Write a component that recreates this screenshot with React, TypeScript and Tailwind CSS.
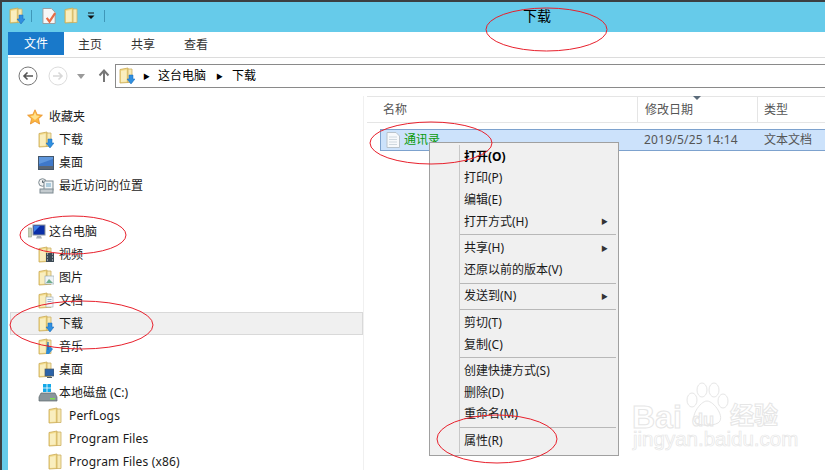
import React from 'react';

const cjk = "font-['Noto_Sans','Noto_Sans_CJK_SC',sans-serif]";

const Folder = ({ children, className = '' }: { children?: React.ReactNode; className?: string }) => (
  <svg viewBox="0 0 16 18" className={`h-[18px] w-[16px] shrink-0 ${className}`}>
    <path d="M1 2.5 L9 1 V15.5 L1 16 Z" fill="#f3dc8e" stroke="#c9a852" strokeWidth="0.8" />
    <path d="M9 2 H13 V15.5 H9 Z" fill="#f7e9b4" stroke="#cdb063" strokeWidth="0.8" />
    <path d="M2 4 L7.5 3 V14.5 L2 15 Z" fill="#f9eebf" />
    {children}
  </svg>
);

const DownArrow = () => <path d="M10 8 H14 V12 H16 L12 17 L8 12 H10 Z" fill="#2f8fe0" stroke="#1669b8" strokeWidth="0.5" />;

const icons: Record<string, React.ReactNode> = {
  download: <Folder><DownArrow /></Folder>,
  folder: <Folder />,
  video: (
    <Folder>
      <rect x="8" y="7" width="8" height="9" fill="#3c4a55" />
      <path d="M9 8 H10 M9 11 H10 M9 14 H10 M14 8 H15 M14 11 H15 M14 14 H15" stroke="#dfe7ec" />
    </Folder>
  ),
  picture: (
    <Folder>
      <rect x="7" y="7" width="9" height="8" fill="#eef3f6" stroke="#8ea3ad" strokeWidth="0.6" />
      <path d="M8 14 L11 10 L15 14 Z" fill="#6fae8e" />
    </Folder>
  ),
  doc: (
    <Folder>
      <rect x="8" y="5" width="7" height="10" fill="#f6f8fa" stroke="#9fb0bb" strokeWidth="0.6" />
      <path d="M9.5 7.5 H13.5 M9.5 9.5 H13.5 M9.5 11.5 H13.5" stroke="#6c93b3" strokeWidth="0.7" />
    </Folder>
  ),
  music: (
    <Folder>
      <path d="M9 6 L15 11 L11 16 H8 Z" fill="#2d8bd6" />
      <path d="M10 4 V12" stroke="#1669b8" strokeWidth="1.2" />
    </Folder>
  ),
  desktopFolder: (
    <Folder>
      <rect x="7" y="8" width="9" height="7" fill="#2c63a8" stroke="#4c5a66" strokeWidth="0.7" />
      <path d="M9 16.5 H14" stroke="#4c5a66" />
    </Folder>
  ),
  star: (
    <svg viewBox="0 0 16 16" className="h-[16px] w-[16px] shrink-0">
      <path d="M8 .8 L10.2 5.6 L15.4 6.2 L11.5 9.7 L12.6 15 L8 12.3 L3.4 15 L4.5 9.7 L.6 6.2 L5.8 5.6 Z" fill="#fbb640" stroke="#e8912a" strokeWidth="0.8" />
      <path d="M8 3 L9.4 6.6 L12.6 7 L8 11 L3.4 7 L6.6 6.6 Z" fill="#ffe08a" />
    </svg>
  ),
  desktop: (
    <svg viewBox="0 0 16 14" className="h-[14px] w-[16px] shrink-0">
      <rect x=".5" y=".5" width="15" height="13" fill="#3f78c9" stroke="#44566a" />
      <rect x="1" y="10" width="14" height="3" fill="#5a6673" />
      <path d="M1 8 L15 3 V1 H1 Z" fill="#5f97dd" />
    </svg>
  ),
  recent: (
    <svg viewBox="0 0 16 16" className="h-[16px] w-[16px] shrink-0">
      <circle cx="4.5" cy="4.5" r="3.8" fill="#f1f1f1" stroke="#7d8a91" />
      <path d="M4.5 2.5 V4.5 H6.5" stroke="#56626a" fill="none" />
      <rect x="6" y="3" width="9" height="9" fill="#eef3f6" stroke="#7d8a91" />
      <path d="M8 6 H13 M8 8 H13" stroke="#6ca4c4" />
      <rect x="2" y="11" width="13" height="4" fill="#c4cbcf" stroke="#7d8a91" />
    </svg>
  ),
  pc: (
    <svg viewBox="0 0 18 16" className="h-[16px] w-[18px] shrink-0">
      <rect x="0" y="4" width="3.5" height="9" fill="#c6d0b4" stroke="#8c9a86" strokeWidth="0.6" />
      <rect x="5" y="1" width="12" height="10" fill="#0a2fa8" stroke="#8b949b" />
      <path d="M6 2 H12 L6 8 Z" fill="#3f7fe8" />
      <path d="M9 12 H13 L14 14.5 H8 Z" fill="#a8b0b6" />
    </svg>
  ),
  drive: (
    <svg viewBox="0 0 20 18" className="h-[18px] w-[20px] shrink-0">
      <rect x="5" y="0" width="3.6" height="3.6" fill="#13a8e8" />
      <rect x="9.4" y="0" width="3.6" height="3.6" fill="#13a8e8" />
      <rect x="5" y="4.4" width="3.6" height="3.6" fill="#13a8e8" />
      <rect x="9.4" y="4.4" width="3.6" height="3.6" fill="#13a8e8" />
      <path d="M3 9 H17 L19 13 V17 H1 V13 Z" fill="#8a959b" stroke="#5d676c" strokeWidth="0.7" />
      <rect x="12" y="14" width="5" height="1.5" fill="#7ce04f" />
    </svg>
  ),
};

const navRows = [
  { icon: 'star', label: '收藏夹', pad: 'pl-[17px]', gap: 'gap-[6px]' },
  { icon: 'download', label: '下载', pad: 'pl-[28px]' },
  { icon: 'desktop', label: '桌面', pad: 'pl-[28px]' },
  { icon: 'recent', label: '最近访问的位置', pad: 'pl-[28px]' },
  { spacer: true },
  { icon: 'pc', label: '这台电脑', pad: 'pl-[18px]', gap: 'gap-[3px]' },
  { icon: 'video', label: '视频', pad: 'pl-[28px]' },
  { icon: 'picture', label: '图片', pad: 'pl-[28px]' },
  { icon: 'doc', label: '文档', pad: 'pl-[28px]' },
  { icon: 'download', label: '下载', pad: 'pl-[28px]', active: true },
  { icon: 'music', label: '音乐', pad: 'pl-[28px]' },
  { icon: 'desktopFolder', label: '桌面', pad: 'pl-[28px]' },
  { icon: 'drive', label: '本地磁盘 (C:)', pad: 'pl-[28px]', gap: 'gap-[1px]' },
  { icon: 'folder', label: 'PerfLogs', pad: 'pl-[38px]', latin: true },
  { icon: 'folder', label: 'Program Files', pad: 'pl-[38px]', latin: true },
  { icon: 'folder', label: 'Program Files (x86)', pad: 'pl-[38px]', latin: true },
];

const menuGroups = [
  [
    { label: '打开(O)', bold: true },
    { label: '打印(P)' },
    { label: '编辑(E)' },
    { label: '打开方式(H)', sub: true },
  ],
  [{ label: '共享(H)', sub: true }, { label: '还原以前的版本(V)' }],
  [{ label: '发送到(N)', sub: true }],
  [{ label: '剪切(T)' }, { label: '复制(C)' }],
  [{ label: '创建快捷方式(S)' }, { label: '删除(D)' }, { label: '重命名(M)' }],
  [{ label: '属性(R)' }],
];

const ellipses = [
  { cx: 546.5, cy: 29.5, rx: 60.5, ry: 21.5 },
  { cx: 431, cy: 143, rx: 61, ry: 21 },
  { cx: 73, cy: 235, rx: 53, ry: 19 },
  { cx: 81.5, cy: 325, rx: 71.5, ry: 24 },
  { cx: 497, cy: 439, rx: 60, ry: 24 },
];

const App = () => {
  return (
    <div className={`relative h-[470px] w-[825px] overflow-hidden bg-white text-[12px] text-[#1a1a1a] ${cjk}`}>
      <div className="flex h-full flex-col border-l-2 border-t-2 border-[#3c3f42]">
        <div className="flex h-full flex-col bg-[#66cbea] pl-[6px]">
          {/* title bar */}
          <div className="flex h-[30px] shrink-0 items-center pb-[3px] pl-[1px]">
            <Folder><DownArrow /></Folder>
            <div className="ml-[6px] h-[12px] w-px bg-[#3f97b8]" />
            <svg viewBox="0 0 16 18" className="ml-[10px] h-[18px] w-[15px]">
              <path d="M1 1 H10 L14 5 V17 H1 Z" fill="#f7f7f7" stroke="#9a9a9a" />
              <path d="M5 11 L8 15 L14 6" fill="none" stroke="#e86c45" strokeWidth="2.4" />
            </svg>
            <Folder className="ml-[7px]" />
            <svg viewBox="0 0 8 8" className="ml-[7px] h-[8px] w-[8px]">
              <path d="M1 1 H7" stroke="#111" />
              <path d="M.5 3.5 H7.5 L4 7 Z" fill="#111" />
            </svg>
            <div className="ml-[9px] h-[12px] w-px bg-[#3f97b8]" />
            <span className="ml-[418px] text-[14px] text-black">下载</span>
          </div>

          {/* ribbon tabs */}
          <div className="flex h-[26px] shrink-0 items-start border-b border-[#dcdcdc] bg-white">
            <div className="flex h-[23px] w-[56px] items-center justify-center bg-[#1979ca] text-white">文件</div>
            <div className="flex h-[23px] items-center gap-[29px] pl-[14px] pt-[2px] text-[#333]">
              <span>主页</span>
              <span>共享</span>
              <span>查看</span>
            </div>
          </div>

          {/* address row */}
          <div className="flex h-[38px] shrink-0 items-center bg-white pb-[2px] pl-[10px]">
            <svg viewBox="0 0 20 20" className="h-[20px] w-[20px]">
              <circle cx="10" cy="10" r="9" fill="#fff" stroke="#777" />
              <path d="M15 10 H6 M9.5 6.5 L6 10 L9.5 13.5" fill="none" stroke="#555" strokeWidth="1.6" />
            </svg>
            <svg viewBox="0 0 20 20" className="ml-[10px] h-[20px] w-[20px]">
              <circle cx="10" cy="10" r="9" fill="#fff" stroke="#dcdcdc" />
              <path d="M5 10 H14 M10.5 6.5 L14 10 L10.5 13.5" fill="none" stroke="#d8d8d8" strokeWidth="1.6" />
            </svg>
            <svg viewBox="0 0 8 5" className="ml-[9px] h-[5px] w-[8px]">
              <path d="M0 0 H8 L4 5 Z" fill="#9a9a9a" />
            </svg>
            <svg viewBox="0 0 12 14" className="ml-[13px] h-[14px] w-[12px]">
              <path d="M6 13 V2 M1.5 6.5 L6 1.5 L10.5 6.5" fill="none" stroke="#777" strokeWidth="2" />
            </svg>
            <div className="ml-[5px] flex h-[24px] flex-1 items-center border border-r-0 border-[#8a8a8a] pl-[3px]">
              <Folder><DownArrow /></Folder>
              <span className="ml-[8px] text-[7px] leading-none text-black">▶</span>
              <span className="ml-[8px] text-black">这台电脑</span>
              <span className="ml-[10px] text-[7px] leading-none text-black">▶</span>
              <span className="ml-[9px] text-black">下载</span>
            </div>
          </div>

          {/* panes */}
          <div className="flex min-h-0 flex-1 bg-white">
            <div className="w-[356px] shrink-0 border-r border-[#f0f0f0] pt-[9px]">
              {navRows.map((row, i) =>
                row.spacer ? (
                  <div key={i} className="h-[23px]" />
                ) : (
                  <div
                    key={i}
                    className={`ml-[2px] flex h-[23px] items-center ${row.active ? 'bg-[#f0f0f0] outline outline-1 -outline-offset-1 outline-[#d9d9d9]' : ''}`}
                  >
                    <div className={`flex items-center ${row.gap ?? 'gap-[5px]'} ${row.pad}`}>
                      {icons[row.icon as string]}
                      <span className={`whitespace-nowrap ${row.latin ? 'tracking-[0.16px]' : ''}`}>{row.label}</span>
                    </div>
                  </div>
                ),
              )}
            </div>

            <div className="min-w-0 flex-1 pl-[16px]">
              {/* column header */}
              <div className="relative -ml-[13px] flex h-[27px] items-center border-y border-[#e5e5e5] text-[#555]">
                <div className="flex h-full w-[271px] items-center border-r border-[#e5e5e5] pl-[16px]">名称</div>
                <div className="flex h-full w-[120px] items-center border-r border-[#e5e5e5] pl-[7px]">修改日期</div>
                <div className="flex h-full items-center pl-[6px]">类型</div>
                <svg viewBox="0 0 8 4" className="absolute left-[326px] -top-px h-[4px] w-[8px]">
                  <path d="M0 0 H8 L4 4 Z" fill="#5b6b7a" />
                </svg>
              </div>
              {/* file row */}
              <div className="mt-[6px] flex h-[22px] items-center border-y border-l border-[#7da2ce] bg-[#cce2fb] text-[#555]">
                <svg viewBox="0 0 14 16" className="ml-[5px] h-[16px] w-[14px] shrink-0">
                  <path d="M1 .5 H10 L13.5 4 V15.5 H1 Z" fill="#f7f9fb" stroke="#b9c3cb" />
                  <path d="M3 5 H11 M3 7.5 H11 M3 10 H11 M3 12.5 H11" stroke="#cfd8df" />
                </svg>
                <span className="ml-[4px] w-[240px] text-[#0a9a0a]">通讯录</span>
                <span className="w-[120px] whitespace-nowrap tracking-[0.2px]">2019/5/25 14:14</span>
                <span>文本文档</span>
              </div>
            </div>
          </div>
        </div>
      </div>

      {/* context menu */}
      <div className="absolute left-[429px] top-[142px] w-[190px] border border-[#a0a0a0] bg-[#f0f0f0] py-[3px] pl-[2px] pr-[2px] text-[#1a1a1a]">
        <div className="absolute bottom-[2px] left-[29px] top-[2px] w-px bg-[#c8c8c8]" />
        {menuGroups.map((group, i) => (
          <div key={i} className={`ml-[27px] ${i > 0 ? 'mt-[2px] border-t border-[#b8b8b8] pt-[2px]' : ''}`}>
            {group.map((item) => (
              <div key={item.label} className={`flex h-[21.6px] items-center justify-between pl-[5px] pr-[8px] ${item.bold ? 'font-bold text-black' : ''}`}>
                <span className="whitespace-nowrap">{item.label}</span>
                {item.sub && <span className="text-[7px] leading-none text-[#333]">▶</span>}
              </div>
            ))}
          </div>
        ))}
      </div>

      {/* hand-drawn annotations */}
      <svg viewBox="0 0 825 470" className="pointer-events-none absolute inset-0 h-[470px] w-[825px]">
        {ellipses.map((e) => (
          <ellipse key={e.cx} cx={e.cx} cy={e.cy} rx={e.rx} ry={e.ry} fill="none" stroke="#e8202c" strokeWidth="1" />
        ))}
      </svg>

      {/* watermark */}
      <div className="absolute left-[632px] top-[381px] h-[74px] w-[160px] select-none font-['Liberation_Sans',sans-serif] text-transparent [-webkit-text-stroke:1px_#e6e6e6]">
        <span className="absolute left-0 top-[20px] text-[32px] font-bold leading-none">Bai</span>
        <svg viewBox="0 0 46 46" className="absolute left-[51px] top-[1px] h-[46px] w-[46px]">
          <ellipse cx="9" cy="18" rx="5" ry="7" fill="#fff" stroke="#e6e6e6" />
          <ellipse cx="19" cy="8" rx="5" ry="7" fill="#fff" stroke="#e6e6e6" />
          <ellipse cx="31" cy="8" rx="5" ry="7" fill="#fff" stroke="#e6e6e6" />
          <ellipse cx="40" cy="19" rx="5" ry="7" fill="#fff" stroke="#e6e6e6" />
          <path d="M24 19 C31 19 43 36 35 41 C29 44 19 44 13 41 C6 36 17 19 24 19 Z" fill="#fff" stroke="#e6e6e6" />
        </svg>
        <span className="absolute left-[60px] top-[30px] text-[18px] font-bold leading-none">du</span>
        <span className="absolute left-[98px] top-[21px] font-['Noto_Sans_CJK_SC',sans-serif] text-[24px] font-bold leading-none">经验</span>
        <span className="absolute left-[1px] top-[48px] whitespace-nowrap text-[20.5px] leading-none [-webkit-text-stroke:0.7px_#e6e6e6]">jingyan.baidu.com</span>
      </div>
    </div>
  );
};

export default App;
